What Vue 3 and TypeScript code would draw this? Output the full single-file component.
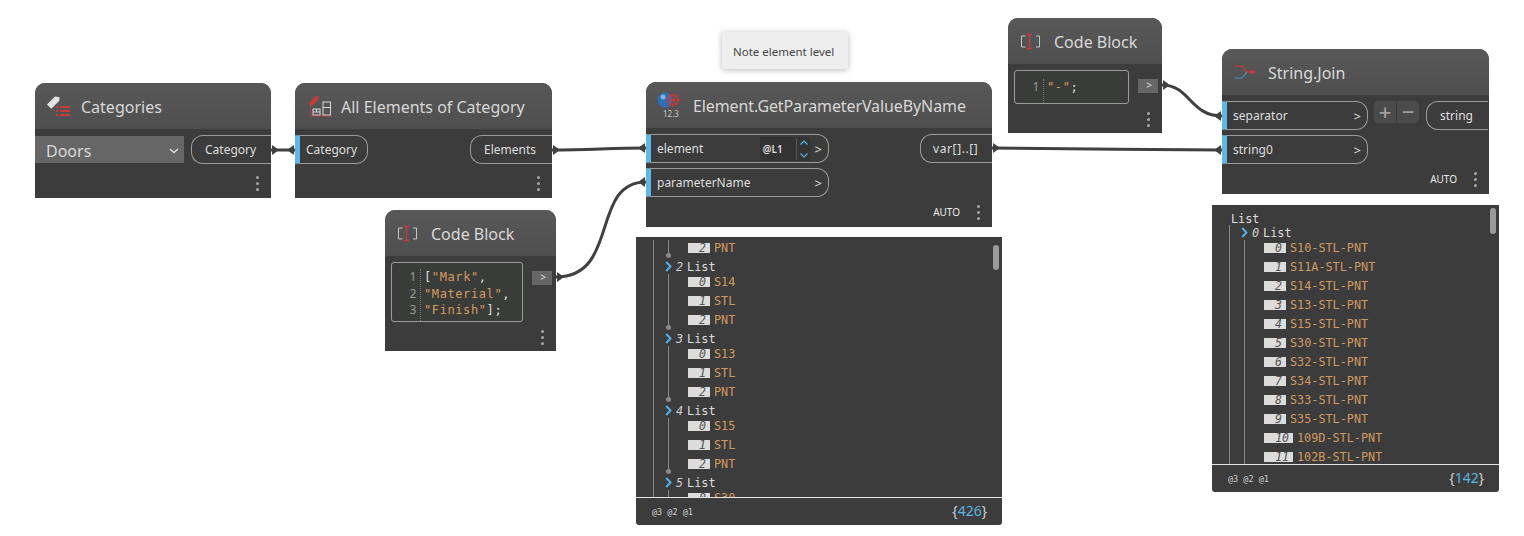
<template>
  <div class="canvas">
    <svg class="wires" width="1524" height="536" viewBox="0 0 1524 536">
      <path v-for="w in wires" :key="w" :d="w" class="wire" />
      <polygon v-for="p in portCaps" :key="p" :points="p" class="cap" />
    </svg>

    <div class="note">Note element level</div>

    <!-- Categories -->
    <section class="node n-categories">
      <header class="header">
        <svg width="25" height="24" viewBox="0 0 25 24">
          <path d="M1 10.500 9 2.500l4.500.8-.2 3.500-8 8z" fill="#e4e4e4" />
          <path d="M10 12h2v2h-2zM14 12h10v2H14zM10 16h2v2h-2zM14 16h10v2H14zM10 20h2v2h-2zM14 20h10v2H14z" fill="#c9393a" />
        </svg>
        <h2>Categories</h2>
      </header>
      <div class="body row-top">
        <div class="dropdown">
          <span>Doors</span>
          <svg width="10" height="6" viewBox="0 0 10 6"><path d="M1 1l4 3.500L9 1" fill="none" stroke="#e0e0e0" stroke-width="1.400" /></svg>
        </div>
        <div class="pill out w-category">Category</div>
      </div>
      <div class="dots"><i /><i /><i /></div>
    </section>

    <!-- All Elements of Category -->
    <section class="node n-all">
      <header class="header">
        <svg width="24" height="24" viewBox="0 0 24 24">
          <path d="M1 9 8 1.500l3 1.500-1 3-6 6z" fill="#c9393a" />
          <path d="M2.500 8v14H24" fill="none" stroke="#c9393a" stroke-width="0.800" />
          <rect x="15" y="8" width="7.500" height="13" fill="none" stroke="#d8d8d8" />
          <path d="M15 13.500h7.500" stroke="#d8d8d8" />
          <rect x="5" y="15" width="7" height="6" fill="none" stroke="#d8d8d8" />
          <path d="M8.500 15v3M5 18h7" stroke="#d8d8d8" />
        </svg>
        <h2>All Elements of Category</h2>
      </header>
      <div class="body row-top between">
        <div class="pill in w-category-in">Category</div>
        <div class="pill out w-elements">Elements</div>
      </div>
      <div class="dots"><i /><i /><i /></div>
    </section>

    <!-- Code block with the parameter names -->
    <section class="node n-code1">
      <header class="header">
        <svg width="21" height="20" viewBox="0 0 21 20">
          <path d="M5.500 5H1.500v11h4M16 5h3.500v11H16" fill="none" stroke="#c4c4c4" stroke-width="1" />
          <path d="M7 3.500h5M7 17.500h5M9.500 3.500v14" fill="none" stroke="#c9393a" stroke-width="1.400" />
        </svg>
        <h2>Code Block</h2>
      </header>
      <div class="body code-row">
        <div class="editor e-three">
          <div class="gutter"><span>1</span><span>2</span><span>3</span></div>
          <div class="code">
            <div class="first"><b>[</b><em>"Mark"</em><b>,</b></div>
            <div><em>"Material"</em><b>,</b></div>
            <div><em>"Finish"</em><b>];</b></div>
          </div>
        </div>
        <div class="code-out">&gt;</div>
      </div>
      <div class="dots"><i /><i /><i /></div>
    </section>

    <!-- Element.GetParameterValueByName -->
    <section class="node n-element">
      <header class="header">
        <svg width="24" height="32" viewBox="0 0 24 32">
          <circle cx="8" cy="11" r="7.500" fill="#2f6fb3" />
          <circle cx="6" cy="8" r="2.500" fill="#7fb2e0" />
          <circle cx="16" cy="11" r="5" fill="none" stroke="#c9393a" stroke-width="3" stroke-dasharray="2.200 1" />
          <circle cx="16" cy="11" r="2" fill="#c9393a" />
          <text x="6" y="28" class="icon-num">12.3</text>
        </svg>
        <h2>Element.GetParameterValueByName</h2>
      </header>
      <div class="body el-body">
        <div class="port-col">
          <div class="pill in w-element">
            <span class="name">element</span>
            <div class="lacing">
              <span>@L1</span>
              <svg width="13" height="22" viewBox="0 0 13 22">
                <path d="M3.500 6.500 7 3l3.500 3.500M3.500 15.500 7 19l3.500-3.500" fill="none" stroke="#58b2e4" stroke-width="1.200" />
              </svg>
            </div>
            <span class="arrow">&gt;</span>
          </div>
          <div class="pill in w-element">
            <span class="name">parameterName</span>
            <span class="arrow">&gt;</span>
          </div>
        </div>
        <div class="pill out w-var">var[]..[]</div>
      </div>
      <div class="foot"><span>AUTO</span><div class="dots inline"><i /><i /><i /></div></div>
    </section>

    <!-- Code block with the separator -->
    <section class="node n-code2">
      <header class="header">
        <svg width="21" height="20" viewBox="0 0 21 20">
          <path d="M5.500 5H1.500v11h4M16 5h3.500v11H16" fill="none" stroke="#c4c4c4" stroke-width="1" />
          <path d="M7 3.500h5M7 17.500h5M9.500 3.500v14" fill="none" stroke="#c9393a" stroke-width="1.400" />
        </svg>
        <h2>Code Block</h2>
      </header>
      <div class="body code-row">
        <div class="editor e-one">
          <div class="gutter"><span>1</span></div>
          <div class="code">
            <div><em>"-"</em><b>;</b></div>
          </div>
        </div>
        <div class="code-out">&gt;</div>
      </div>
      <div class="dots"><i /><i /><i /></div>
    </section>

    <!-- String.Join -->
    <section class="node n-join">
      <header class="header">
        <svg width="22" height="16" viewBox="0 0 22 16">
          <path d="M0 2h7l5 6" fill="none" stroke="#c9393a" stroke-width="1.200" />
          <path d="M0 14h7l5-6" fill="none" stroke="#3d8fd0" stroke-width="1.200" />
          <path d="M12 8h5" stroke="#c9393a" stroke-width="1.200" />
          <path d="M16 5l5 3-5 3z" fill="#c9393a" />
        </svg>
        <h2>String.Join</h2>
      </header>
      <div class="body el-body">
        <div class="port-col">
          <div class="pill in w-join"><span class="name">separator</span><span class="arrow">&gt;</span></div>
          <div class="pill in w-join"><span class="name">string0</span><span class="arrow">&gt;</span></div>
        </div>
        <div class="addremove">
          <span class="plus">+</span>
          <span class="minus">−</span>
        </div>
        <div class="pill out w-string">string</div>
      </div>
      <div class="foot"><span>AUTO</span><div class="dots inline"><i /><i /><i /></div></div>
    </section>

    <!-- Watch preview under Element.GetParameterValueByName -->
    <section class="preview p-element">
      <div class="scrollbar" />
      <div class="tree-view">
        <div class="tree">
          <div class="group partial">
            <div class="items">
              <div class="item">
                <span class="idx">2</span><span class="val">PNT</span>
              </div>
              <i class="end-dot" />
            </div>
          </div>
          <div v-for="g in elementGroups" :key="g.index" class="group">
            <div class="list-row">
              <svg width="7" height="11" viewBox="0 0 7 11"><path d="M1.200 1 5.500 5.500 1.200 10" fill="none" stroke="#4fb0e2" stroke-width="2" /></svg>
              <span class="list-idx">{{ g.index }}</span>
              <span>List</span>
            </div>
            <div class="items">
              <div v-for="(t, i) in g.items" :key="t" class="item">
                <span class="idx">{{ i }}</span><span class="val">{{ t }}</span>
              </div>
              <i class="end-dot" />
            </div>
          </div>
        </div>
      </div>
      <footer class="preview-foot">
        <span class="levels">@3 @2 @1</span>
        <span class="count">{<b>426</b>}</span>
      </footer>
    </section>

    <!-- Watch preview under String.Join -->
    <section class="preview p-join">
      <div class="scrollbar" />
      <div class="tree-view">
        <div class="root-row">List</div>
        <div class="tree">
          <div class="group">
            <div class="list-row">
              <svg width="7" height="11" viewBox="0 0 7 11"><path d="M1.200 1 5.500 5.500 1.200 10" fill="none" stroke="#4fb0e2" stroke-width="2" /></svg>
              <span class="list-idx">0</span>
              <span>List</span>
            </div>
            <div class="items">
              <div v-for="(t, i) in joined" :key="t" class="item">
                <span class="idx" :class="{ wide: i > 9 }">{{ i }}</span><span class="val">{{ t }}</span>
              </div>
            </div>
          </div>
        </div>
      </div>
      <footer class="preview-foot">
        <span class="levels">@3 @2 @1</span>
        <span class="count">{<b>142</b>}</span>
      </footer>
    </section>
  </div>
</template>

<script setup lang="ts">
import { computed } from "vue";

type Group = { index: number; items: string[] };

const elementGroups: Group[] = [
  { index: 2, items: ["S14", "STL", "PNT"] },
  { index: 3, items: ["S13", "STL", "PNT"] },
  { index: 4, items: ["S15", "STL", "PNT"] },
  { index: 5, items: ["S30", "STL", "PNT"] },
];

const joined = [
  "S10-STL-PNT",
  "S11A-STL-PNT",
  "S14-STL-PNT",
  "S13-STL-PNT",
  "S15-STL-PNT",
  "S30-STL-PNT",
  "S32-STL-PNT",
  "S34-STL-PNT",
  "S33-STL-PNT",
  "S35-STL-PNT",
  "109D-STL-PNT",
  "102B-STL-PNT",
];

const wires = [
  "M271 150H295",
  "M552 150C590 150 610 148 646 148",
  "M556 277C620 277 590 182 646 182",
  "M992 148C1060 148 1150 150 1222 150",
  "M1162 85C1190 85 1190 116 1222 116",
];

// flared wire ends: [x of the node edge, y, direction away from the node]
const ports: [number, number, number][] = [
  [271, 150, 1],
  [295, 150, -1],
  [552, 150, 1],
  [646, 148, -1],
  [646, 182, -1],
  [556, 277, 1],
  [992, 148, 1],
  [1222, 150, -1],
  [1222, 116, -1],
  [1162, 85, 1],
];

const portCaps = computed(() =>
  ports.map(([x, y, d]) => {
    const a = x + d;
    const b = x + d * 6;
    return `${a},${y - 5} ${b},${y - 1.5} ${b},${y + 1.5} ${a},${y + 5}`;
  }),
);
</script>

<style scoped>
.canvas {
  position: relative;
  width: 1524px;
  height: 536px;
  overflow: hidden;
  background: #fff;
  font-family: "Noto Sans", "Open Sans", sans-serif;
  color: #dedede;
}

.wires {
  position: absolute;
  left: 0;
  top: 0;
}

.wire {
  fill: none;
  stroke: #404040;
  stroke-width: 3;
}

.cap {
  fill: #404040;
}

.note {
  position: absolute;
  left: 722px;
  top: 32px;
  width: 126px;
  height: 37px;
  box-sizing: border-box;
  padding-left: 11px;
  line-height: 39px;
  font-size: 11.500px;
  color: #454545;
  background: #eeeeee;
  border-radius: 2px;
  box-shadow: 0 1px 6px rgba(0, 0, 0, 0.28);
}

.node {
  position: absolute;
  display: flex;
  flex-direction: column;
  background: #3c3c3c;
  border-radius: 10px 10px 0 0;
}

.n-categories { left: 35px; top: 83px; width: 236px; height: 115px; }
.n-all { left: 295px; top: 83px; width: 257px; height: 115px; }
.n-code1 { left: 385px; top: 210px; width: 171px; height: 141px; }
.n-element { left: 646px; top: 82px; width: 346px; height: 145px; }
.n-code2 { left: 1008px; top: 18px; width: 154px; height: 115px; }
.n-join { left: 1222px; top: 49px; width: 267px; height: 145px; }

.header {
  flex: none;
  height: 46px;
  display: flex;
  align-items: center;
  gap: 10px;
  padding-left: 11px;
  background: linear-gradient(180deg, #585858, #4f4f4f);
  border-radius: 10px 10px 0 0;
}

.n-all .header { padding-left: 13px; gap: 9px; }
.n-element .header { gap: 12px; }
.n-code1 .header,
.n-code2 .header { padding-left: 12px; gap: 13px; }
.n-join .header { padding-left: 13px; gap: 11px; }

.header h2 {
  margin: 2px 0 0;
  font-size: 16px;
  font-weight: 400;
  color: #d8d8d8;
  white-space: nowrap;
}

.n-element .header h2 {
  letter-spacing: -0.1px;
}

.icon-num {
  font-size: 8px;
  fill: #c8c8c8;
}

.body {
  flex: 1;
  display: flex;
}

.row-top {
  align-items: flex-start;
  padding-top: 6px;
  gap: 7px;
}

.between {
  justify-content: space-between;
}

.dropdown {
  width: 149px;
  height: 27px;
  margin-top: 1px;
  box-sizing: border-box;
  padding: 2px 5px 0 11px;
  display: flex;
  align-items: center;
  justify-content: space-between;
  background: #666;
  font-size: 16px;
  color: #d8d8d8;
}

.pill {
  box-sizing: border-box;
  height: 29px;
  display: flex;
  align-items: center;
  border: 1px solid #9b9b9b;
  font-size: 12px;
  color: #dedede;
}

.pill.in {
  border-left: 5px solid #5cb8e6;
  border-radius: 0 12px 12px 0;
  padding-left: 6px;
  padding-right: 6px;
}

.pill.out {
  border-right: 0;
  border-radius: 12px 0 0 12px;
  padding-left: 13px;
}

.w-category { width: 80px; }
.w-category-in { width: 73px; }
.w-elements { width: 82px; }
.w-element { width: 183px; }
.w-var { width: 72px; margin-left: auto; padding-left: 12px !important; letter-spacing: 0.6px; }
.w-join { width: 146px; }
.w-string { width: 62px; margin-left: 7px; }

.name {
  flex: 1;
}

.arrow {
  font-size: 13px;
}

.lacing {
  width: 50px;
  height: 24px;
  margin-right: 5px;
  box-sizing: border-box;
  padding-left: 3px;
  display: flex;
  align-items: center;
  justify-content: space-between;
  background: #333;
  font-size: 10px;
  font-weight: 600;
}

.lacing svg {
  border-left: 1px solid #5a5a5a;
}

.port-col {
  display: flex;
  flex-direction: column;
  gap: 5px;
}

.el-body {
  align-items: flex-start;
  padding-top: 6px;
}

.addremove {
  display: flex;
  gap: 1px;
  margin-left: 6px;
}

.addremove span {
  width: 22px;
  height: 22px;
  padding-bottom: 3px;
  box-sizing: border-box;
  display: flex;
  align-items: center;
  justify-content: center;
  background: #4b4b4b;
  color: #a0a0a0;
  font-size: 22px;
  font-weight: 500;
}

.plus { border-radius: 4px 0 0 4px; }
.minus { border-radius: 0 4px 4px 0; }

.foot {
  flex: none;
  height: 30px;
  display: flex;
  align-items: center;
  justify-content: flex-end;
  gap: 17px;
  padding: 0 12px 0 0;
  font-size: 10px;
  font-weight: 400;
  color: #e8e8e8;
}

.dots {
  flex: none;
  height: 30px;
  display: flex;
  flex-direction: column;
  align-items: flex-end;
  justify-content: center;
  gap: 3px;
  padding-right: 12px;
}

.dots.inline {
  padding-right: 0;
}

.dots i {
  width: 3px;
  height: 3px;
  border-radius: 50%;
  background: #a8a8a8;
}

.code-row {
  gap: 9px;
  padding: 6px 0 0 6px;
  align-items: flex-start;
}

.editor {
  box-sizing: border-box;
  display: flex;
  border: 1px solid #9b9b9b;
  border-radius: 3px;
  background: #3a3c3a;
  font-family: "DejaVu Sans Mono", "Liberation Mono", monospace;
  font-size: 12px;
  letter-spacing: 0.6px;
  line-height: 16.500px;
  padding-top: 6px;
}

.e-three { width: 132px; height: 60px; }
.e-one { width: 115px; height: 34px; padding-top: 8px; }

.gutter {
  width: 29px;
  box-sizing: border-box;
  display: flex;
  flex-direction: column;
  align-items: flex-end;
  padding-right: 3px;
  color: #9a9a9a;
  border-right: 1px dotted #777;
  font-family: "Noto Sans", sans-serif;
  font-size: 12px;
}

.code {
  padding-left: 3px;
}

.code em {
  font-style: normal;
  color: #d59a5f;
}

.code b {
  font-weight: 400;
  color: #dedede;
}

.code-out {
  flex: none;
  width: 20px;
  height: 14px;
  margin-top: 9px;
  padding-left: 2px;
  box-sizing: border-box;
  background: #666;
  color: #ddd;
  font-size: 10px;
  line-height: 13px;
  text-align: center;
}

.preview {
  position: absolute;
  display: flex;
  flex-direction: column;
  background: #3c3c3c;
  border-radius: 0 0 3px 3px;
  overflow: hidden;
  font-family: "DejaVu Sans Mono", "Liberation Mono", monospace;
  font-size: 11.800px;
}

.p-element { left: 636px; top: 237px; width: 366px; height: 288px; }
.p-join { left: 1212px; top: 205px; width: 287px; height: 287px; }

.tree-view {
  flex: 1;
  min-height: 0;
  overflow: hidden;
  display: flex;
  flex-direction: column;
}

.p-element .tree-view { padding-top: 3px; }
.p-join .tree-view { padding-top: 6px; }

.root-row {
  height: 14px;
  line-height: 16px;
  margin-left: 19px;
  color: #dedede;
}

.tree {
  flex: 1;
  margin-left: 17px;
  border-left: 1px solid #8a8a8a;
}

.group {
  margin-left: 11px;
  padding-bottom: 4px;
}

.list-row {
  height: 15px;
  display: flex;
  align-items: center;
  gap: 4px;
  color: #dedede;
}

.list-idx {
  font-style: italic;
  color: #cfcfcf;
}

.items {
  position: relative;
  margin-left: 3px;
  padding-left: 19px;
  border-left: 1px solid #8a8a8a;
  display: flex;
  flex-direction: column;
  gap: 4px;
}

.end-dot {
  position: absolute;
  left: -3px;
  bottom: -3px;
  width: 5px;
  height: 5px;
  border-radius: 50%;
  background: #8a8a8a;
}

.item {
  height: 15px;
  display: flex;
  align-items: center;
  gap: 4px;
}

.idx {
  width: 22px;
  height: 10px;
  box-sizing: border-box;
  padding-right: 4px;
  background: #dcdcdc;
  color: #555;
  font-style: italic;
  font-size: 11.500px;
  line-height: 10px;
  text-align: right;
}

.idx.wide {
  width: 29px;
}

.val {
  color: #d09a60;
}

.preview-foot {
  flex: none;
  height: 27px;
  box-sizing: content-box;
  border-top: 1px solid #e4e4e4;
  display: flex;
  align-items: center;
  justify-content: space-between;
  padding: 0 15px 0 16px;
  font-family: "Noto Sans", sans-serif;
}

.levels {
  font-family: "DejaVu Sans Mono", monospace;
  font-size: 8.500px;
  color: #cfcfcf;
}

.count {
  margin-top: -3px;
  font-size: 14px;
  color: #cfcfcf;
}

.count b {
  font-weight: 400;
  color: #5cb3e0;
}

.scrollbar {
  position: absolute;
  right: 3px;
  top: 8px;
  width: 6px;
  height: 25px;
  border-radius: 3px;
  background: #9a9a9a;
  z-index: 1;
}

.p-join .scrollbar {
  top: 3px;
  height: 26px;
}
</style>
